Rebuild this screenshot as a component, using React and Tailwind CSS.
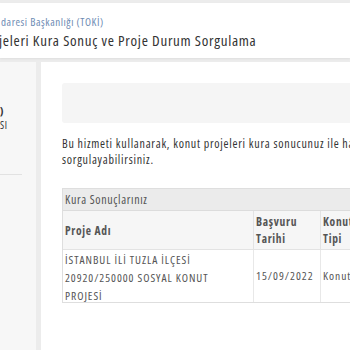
import React from 'react';

const App = () => {
  return (
    <div className="w-[350px] h-[350px] overflow-hidden bg-[#ececec] pt-[3px] font-['Open_Sans',sans-serif] font-stretch-semi-condensed tracking-[0.7px] text-[#333]">
      <div className="h-[55px] bg-white shadow-[0_1px_2px_rgba(0,0,0,0.06)] whitespace-nowrap overflow-hidden">
        <div className="pt-[12px] text-[11px] leading-[14px] tracking-[0.55px] text-[#6d8bb3] ml-[1px]">daresi Başkanlığı (TOKİ)</div>
        <div className="mt-[1px] text-[15px] leading-[20px] text-[#333] -ml-[1px]">jeleri Kura Sonuç ve Proje Durum Sorgulama</div>
      </div>

      <div className="flex mt-[4px] h-[300px]">
        <div className="w-[36px] shrink-0 bg-[#f7f7f7] pt-[42px] overflow-hidden whitespace-nowrap">
          <div className="text-[11px] leading-[14px] font-bold text-[#333]">)</div>
          <div className="text-[10px] leading-[14px] text-[#333]">SI</div>
          <div className="mt-[42px] h-px w-[22px] bg-[#e2e2e2]"></div>
        </div>

        <div className="ml-[5px] flex-1 bg-white pl-[21px] pt-[21px] overflow-hidden">
          <div className="h-[40px] w-[400px] rounded-[3px] bg-[#f5f5f5]"></div>

          <p className="mt-[13px] w-[400px] text-[12px] leading-[16px] tracking-[0.75px] text-[#333] whitespace-nowrap">
            Bu hizmeti kullanarak, konut projeleri kura sonucunuz ile hakkındaki bilgileri
            <br />
            sorgulayabilirsiniz.
          </p>

          <div className="mt-[20px] w-[400px] border border-[#dedede]">
            <div className="h-[22px] bg-[#ebebeb] border-b border-[#dcdcdc] pl-[2px] text-[12px] leading-[22px] tracking-[0.65px] text-[#555]">
              Kura Sonuçlarınız
            </div>
            <div className="flex bg-[#f6f6f6] border-b border-[#e3e3e3] text-[11.5px] leading-[17px] font-bold text-[#555]">
              <div className="w-[190px] h-[38px] pl-[2px] flex items-center">Proje Adı</div>
              <div className="w-[67px] h-[38px] pl-[2px] pt-[2px] border-l border-[#e3e3e3]">Başvuru<br />Tarihi</div>
              <div className="w-[80px] h-[38px] pl-[2px] pt-[2px] border-l border-[#e3e3e3]">Konut<br />Tipi</div>
            </div>
            <div className="flex bg-white text-[11.5px] leading-[18px] tracking-[0.95px] text-[#555]">
              <div className="w-[190px] h-[52px] pl-[2px] pt-[1px]">
                İSTANBUL İLİ TUZLA İLÇESİ<br />20920/250000 SOSYAL KONUT<br />PROJESİ
              </div>
              <div className="w-[67px] h-[52px] pl-[2px] flex items-center border-l border-[#e8e8e8] tracking-[1px]">15/09/2022</div>
              <div className="w-[80px] h-[52px] pl-[2px] flex items-center border-l border-[#e8e8e8]">Konut</div>
            </div>
          </div>
        </div>
      </div>
    </div>
  );
};

export default App;
